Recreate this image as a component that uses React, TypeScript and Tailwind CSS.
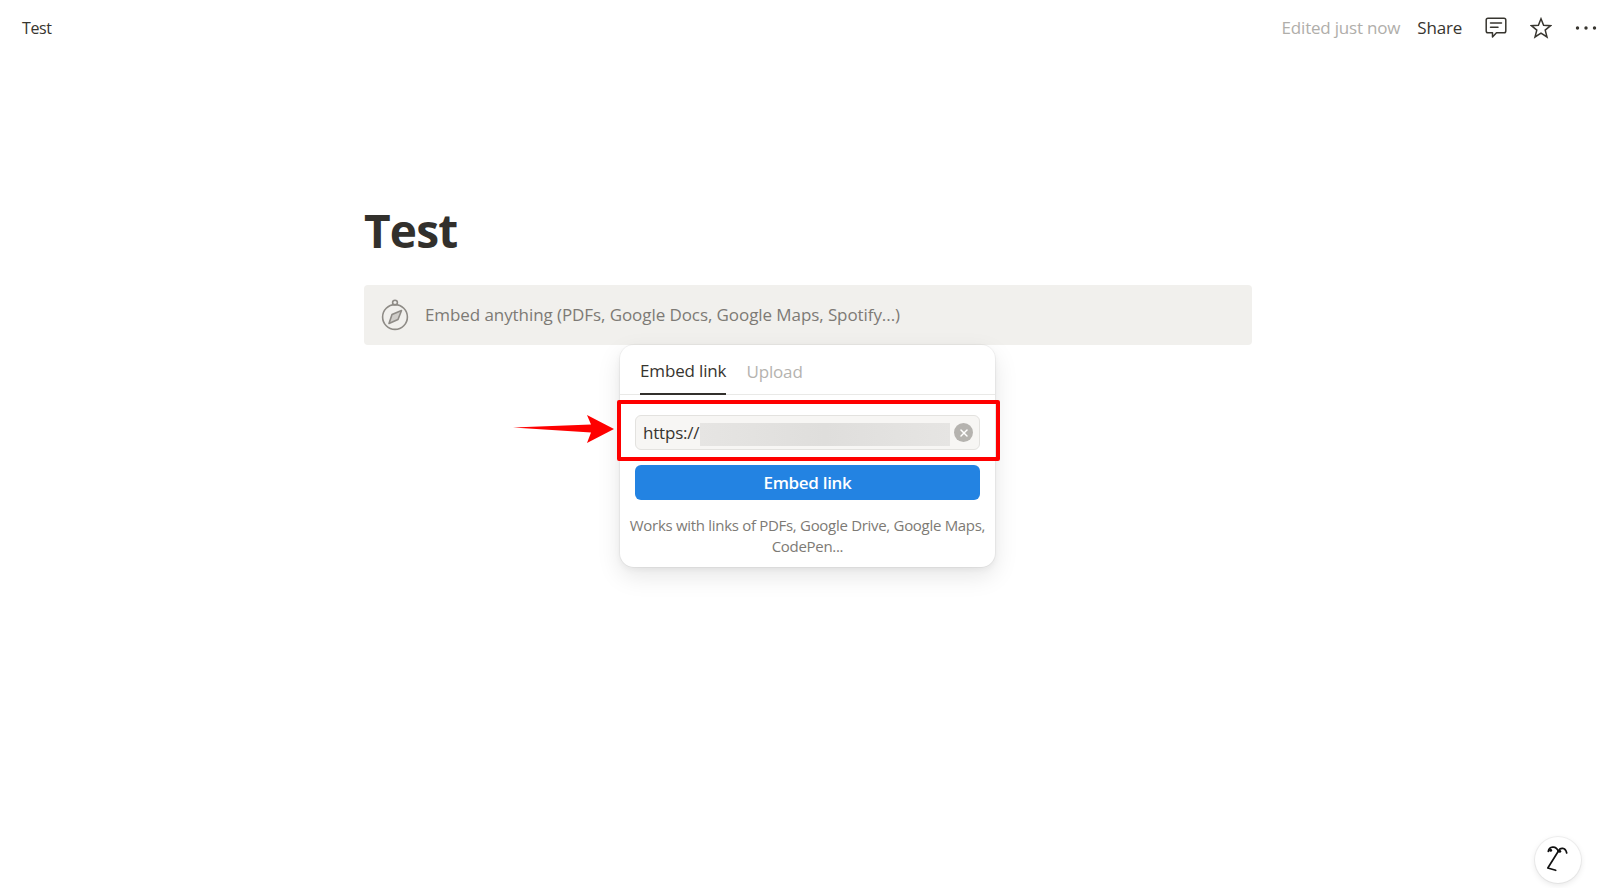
import { X } from 'lucide-react';

const font = "font-['Open_Sans','Noto_Sans',sans-serif]";

function CompassIcon() {
  return (
    <svg width="30" height="32" viewBox="0 0 30 32" fill="none" stroke="#8e8b86" strokeWidth="1.6">
      <circle cx="15" cy="18" r="12.4" />
      <circle cx="15" cy="3.6" r="2.4" />
      <path d="M21.5 11.5 L18 20.5 L9 24.5 L12 15.5 Z" fill="#8e8b86" fillOpacity="0.35" strokeLinejoin="round" />
    </svg>
  );
}

function CommentIcon() {
  return (
    <svg width="22" height="22" viewBox="0 0 22 22" fill="none" stroke="#37352f" strokeWidth="1.5" strokeLinejoin="round">
      <path d="M3 1.2 H19 Q20.8 1.2 20.8 3 V14 Q20.8 15.8 19 15.8 H11.5 L7.5 20 V15.8 H3 Q1.2 15.8 1.2 14 V3 Q1.2 1.2 3 1.2 Z" />
      <path d="M5.5 6 H16.5 M5.5 10.2 H13" strokeLinecap="round" />
    </svg>
  );
}

function StarIcon() {
  return (
    <svg width="22" height="22" viewBox="0 0 22 22" fill="none" stroke="#37352f" strokeWidth="1.5" strokeLinejoin="miter">
      <path d="M11 1.8 L13.6 8.2 L20.6 8.7 L15.2 13.1 L17 20 L11 16.2 L5 20 L6.8 13.1 L1.4 8.7 L8.4 8.2 Z" />
    </svg>
  );
}

function DotsIcon() {
  return (
    <svg width="22" height="6" viewBox="0 0 22 6" fill="#37352f">
      <circle cx="2.5" cy="3" r="1.7" />
      <circle cx="11" cy="3" r="1.7" />
      <circle cx="19.5" cy="3" r="1.7" />
    </svg>
  );
}

function HelpFace() {
  return (
    <svg width="24" height="28" viewBox="0 0 24 28" fill="none" stroke="#111" strokeWidth="1.7" strokeLinecap="round" strokeLinejoin="round" className="-mt-[2px]">
      <path d="M2.3 6.3 C3 1.5 10 0 12.3 6.3" />
      <path d="M12.3 6.3 C14 2.2 19.5 2 20.7 8" />
      <circle cx="4.6" cy="5.3" r="1.5" fill="#111" stroke="none" />
      <circle cx="13.7" cy="6.3" r="1.5" fill="#111" stroke="none" />
      <path d="M12.3 6.3 L1.8 23 L9.7 25.3" />
    </svg>
  );
}

export default function App() {
  return (
    <div className={`${font} relative h-[888px] w-[1619px] overflow-hidden bg-white text-[#37352f]`}>
      {/* Top bar */}
      <div className="flex h-[56px] items-center justify-between pl-[22px] pr-[22px]">
        <span className="text-[16px] tracking-[-0.4px] text-[#37352f]">Test</span>
        <div className="flex items-center">
          <span className="text-[17px] tracking-[-0.2px] text-[#b0aeaa]">Edited just now</span>
          <span className="ml-[17px] text-[17px] tracking-[-0.2px] text-[#37352f]">Share</span>
          <span className="ml-[23px]"><CommentIcon /></span>
          <span className="ml-[23px]"><StarIcon /></span>
          <span className="ml-[23px] flex"><DotsIcon /></span>
        </div>
      </div>

      {/* Page body */}
      <div className="ml-[364px] w-[888px]">
        <h1 className="mt-[141px] h-[88px] text-[46px] font-bold leading-[66px] tracking-[-0.8px] text-[#32302c]">Test</h1>
        <div className="flex h-[60px] items-center rounded-[4px] bg-[#f1f0ed] pl-[16px]">
          <CompassIcon />
          <span className="ml-[15px] text-[17px] tracking-[-0.08px] text-[#7d7a75]">Embed anything (PDFs, Google Docs, Google Maps, Spotify...)</span>
        </div>

        {/* Popover */}
        <div className="ml-[256px] h-[222px] w-[375px] rounded-[14px] bg-white shadow-[0_0_0_1px_rgba(15,15,15,0.04),0_3px_6px_rgba(15,15,15,0.05),0_9px_24px_rgba(15,15,15,0.1)]">
          <div className="flex h-[50px] gap-[20px] border-b border-[#e9e9e7] px-[20px]">
            <div className="flex h-[50px] items-center border-b-2 border-[#32302c] pt-[4px] text-[17px] tracking-[-0.15px] text-[#37352f]">Embed link</div>
            <div className="flex h-[50px] items-center pt-[4px] text-[17px] tracking-[-0.15px] text-[#b5b3af]">Upload</div>
          </div>
          <div className="px-[15px] pt-[20px]">
            <div className="relative flex h-[35px] items-center rounded-[6px] border border-[#e3e2df] bg-[#f7f6f4] pl-[7px] pt-[1px] text-[17px] tracking-[-0.2px] text-[#37352f]">
              <span>https://</span>
              <div className="absolute left-[64px] top-[7px] h-[23px] w-[250px] bg-gradient-to-r from-[#e6e5e3] via-[#dfdedc] to-[#e6e5e3]" />
              <span className="absolute right-[6px] top-[7px] flex h-[19px] w-[19px] items-center justify-center rounded-full bg-[#b5b3af]">
                <X className="h-[12px] w-[12px] text-white" strokeWidth={3} />
              </span>
            </div>
            <div className="mt-[15px] flex h-[35px] items-center justify-center rounded-[6px] bg-[#2383e2] text-[17px] font-semibold tracking-[-0.3px] text-white">Embed link</div>
          </div>
          <p className="mx-auto mt-[15px] w-[372px] text-center text-[15px] leading-[21px] tracking-[-0.3px] text-[#7d7a75]">
            Works with links of PDFs, Google Drive, Google Maps, CodePen...
          </p>
        </div>
      </div>

      {/* Annotation: red box and arrow over the popover */}
      <div className="absolute left-[617px] top-[400px] h-[61px] w-[383px] rounded-[2px] border-[4px] border-[#fe0000]" />
      <svg className="absolute left-[512px] top-[414px]" width="104" height="30" viewBox="0 0 104 30">
        <path d="M1 13.5 L79 10.5 L75 1 L102 15 L75 29 L79 18.5 Z" fill="#fe0000" />
      </svg>

      {/* Help button */}
      <div className="absolute left-[1535px] top-[837px] flex h-[46px] w-[46px] items-center justify-center rounded-full bg-white shadow-[0_0_0_1px_rgba(15,15,15,0.05),0_2px_6px_rgba(15,15,15,0.1)]">
        <HelpFace />
      </div>
    </div>
  );
}
